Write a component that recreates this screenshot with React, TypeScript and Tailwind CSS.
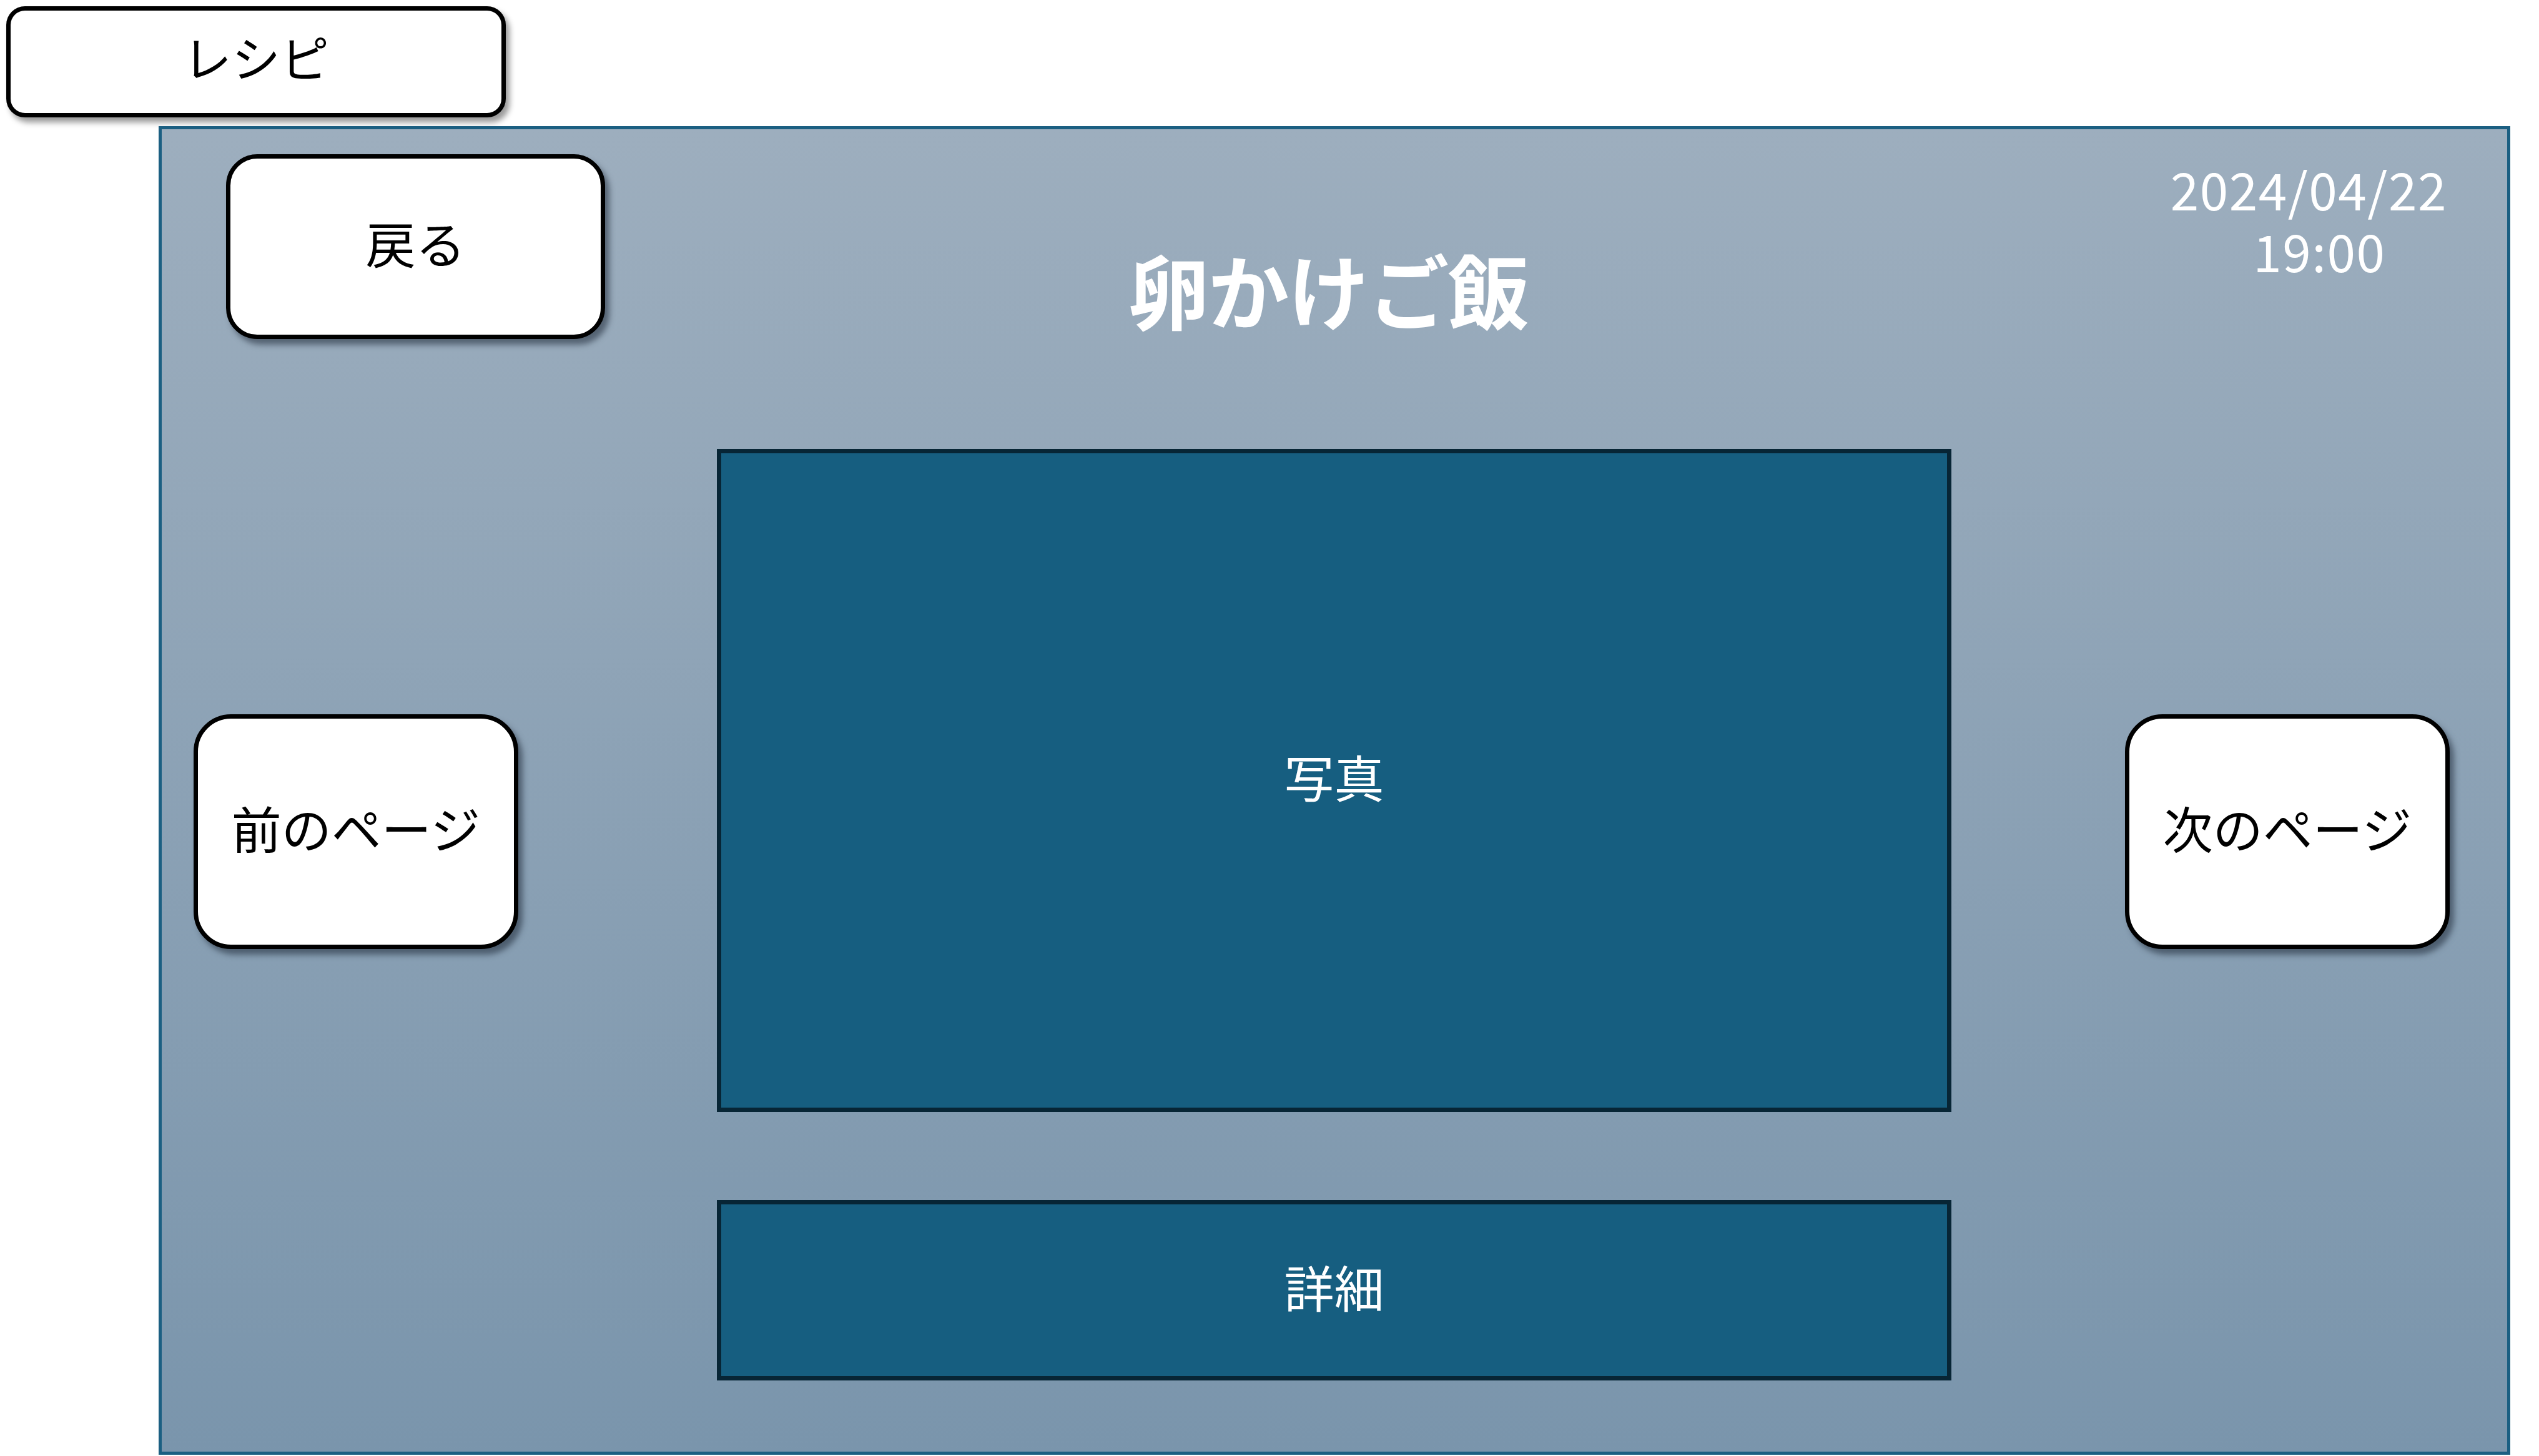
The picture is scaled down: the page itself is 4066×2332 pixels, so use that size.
import React from "react";

const font = { fontFamily: '"Noto Sans CJK JP", "Noto Sans", sans-serif' };

function WhiteButton({ label, className }: { label: string; className: string }) {
  return (
    <div
      className={
        "flex items-center justify-center bg-white border-[7px] border-black text-black text-[80px] leading-none font-normal shadow-[7px_9px_10px_rgba(30,40,55,0.55)] " +
        className
      }
    >
      <span className="pb-[16px]">{label}</span>
    </div>
  );
}

export default function App() {
  return (
    <div className="w-[4066px] h-[2332px] bg-white flex flex-col overflow-hidden" style={font}>
      <div className="ml-[10px] mt-[10px] w-[800px] h-[178px] flex items-center justify-center bg-white border-[7px] border-black rounded-[30px] shadow-[6px_8px_10px_rgba(0,0,0,0.4)] text-[78px] leading-none text-black">
        <span className="pb-[18px]">レシピ</span>
      </div>

      <div className="ml-[254px] mt-[14px] w-[3766px] h-[2128px] border-[5px] border-[#1b5f82] bg-linear-to-b from-[#9daebe] to-[#7a95ac] grid grid-cols-[889px_1977px_1fr] grid-rows-[512px_1062px_auto]">
        {/* header row */}
        <div className="pt-[40px] pl-[103px]">
          <WhiteButton label="戻る" className="w-[607px] h-[296px] rounded-[50px]" />
        </div>
        <div className="flex justify-center pt-[189px] pr-[20px]">
          <h1 className="text-[130px] leading-none font-bold text-white tracking-[-2px]">卵かけご飯</h1>
        </div>
        <div className="flex justify-end pr-[96px] pt-[45px]">
          <p className="text-white text-[82px] leading-[99px] text-center font-normal tracking-[1.5px]">
            2024/04/22
            <br />
            <span className="pl-[34px]">19:00</span>
          </p>
        </div>

        {/* photo row */}
        <div className="pt-[425px] pl-[51px]">
          <WhiteButton label="前のページ" className="w-[520px] h-[376px] rounded-[60px]" />
        </div>
        <div className="border-[7px] border-[#072535] bg-[#165e80] flex items-center justify-center">
          <span className="text-white text-[80px] leading-none pb-[16px]">写真</span>
        </div>
        <div className="pt-[425px] pl-[278px]">
          <WhiteButton label="次のページ" className="w-[520px] h-[376px] rounded-[60px]" />
        </div>

        {/* details row */}
        <div />
        <div className="mt-[141px] h-[289px] border-[7px] border-[#072535] bg-[#165e80] flex items-center justify-center">
          <span className="text-white text-[80px] leading-none pb-[16px]">詳細</span>
        </div>
        <div />
      </div>
    </div>
  );
}
